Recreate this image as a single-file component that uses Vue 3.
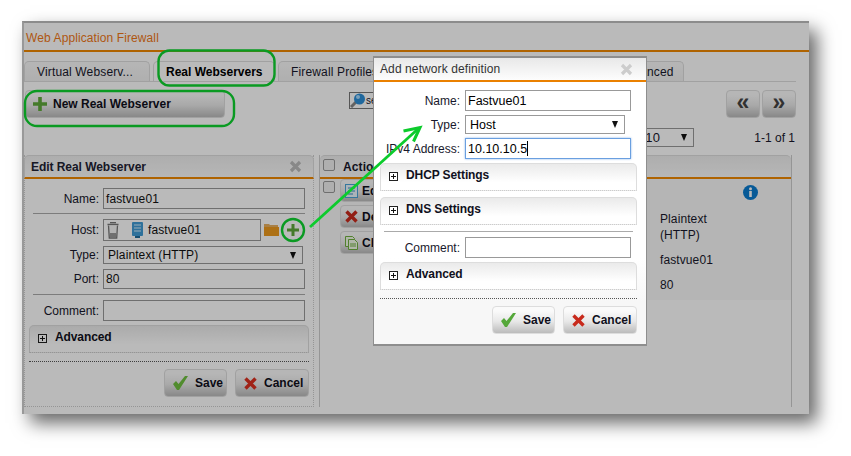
<script setup>
const tabs = [
  { id: 1, label: 'Virtual Webserv...', width: 126 },
  { id: 2, label: 'Real Webservers', width: 122, active: true },
  { id: 3, label: 'Firewall Profiles', width: 118 },
  { id: 4, label: '', width: 116 },
  { id: 5, label: '', width: 85 },
  { id: 6, label: 'Advanced', width: 78 }
]
</script>

<template>
  <div class="stage">
    <div class="window">
      <div class="title">Web Application Firewall</div>
      <div class="tabs">
        <div
          v-for="t in tabs"
          :key="t.id"
          class="tab"
          :class="{ active: t.active }"
          :style="{ width: t.width + 'px' }"
        >{{ t.label }}</div>
      </div>

      <div class="toolbar">
        <button class="btn new">
          <svg width="14" height="14" viewBox="0 0 14 14"><path d="M5.2 0h3.6v5.2H14v3.6H8.8V14H5.2V8.8H0V5.2h5.2z" fill="#5fa83a" /></svg>
          <span>New Real Webserver</span>
        </button>
        <div class="search">
          <svg width="16" height="15" viewBox="0 0 16 15"><path d="M6 9 1 14" stroke="#888" stroke-width="3" /><circle cx="9.500" cy="6" r="5.500" fill="#2c8fd8" /><circle cx="8" cy="4" r="2" fill="#a8dcff" /></svg>
          <span>search</span>
        </div>
        <div class="pager">
          <button class="btn page">«</button>
          <button class="btn page">»</button>
        </div>
      </div>

      <div class="paging">
        <div class="perpage"><span>10</span><i class="caret"></i></div>
        <div class="count">1-1 of 1</div>
      </div>

      <div class="main">
        <section class="edit">
          <header class="phead">
            <span>Edit Real Webserver</span>
            <svg class="close" width="13" height="13" viewBox="0 0 13 13"><path d="M2 2l9 9M11 2l-9 9" stroke="#bbb" stroke-width="3.2" /></svg>
          </header>
          <div class="form">
            <div class="row"><label>Name:</label><div class="input w202 h21">fastvue01</div></div>
            <div class="hr hr1"></div>
            <div class="row host">
              <label>Host:</label>
              <div class="input hostbox">
                <svg width="12" height="17" viewBox="0 0 12 17"><path d="M3 .7h6M.5 2.500h11" stroke="#777" stroke-width="1.300" fill="none" /><path d="M1.500 3.500 2.300 16h7.400l.8-12.500" fill="#f4f4f4" stroke="#777" stroke-width="1.300" /><rect x="3" y="11" width="6" height="4" fill="#999" /></svg>
                <svg class="srv" width="12" height="17" viewBox="0 0 12 17"><rect width="11" height="14" rx="1" fill="#3f9bd5" /><path d="M2 3h7M2 6h7M2 9h7" stroke="#d5eefc" /><path d="M3 14h5v2H3z" fill="#1d6a9c" /></svg>
                <span>fastvue01</span>
              </div>
              <svg class="folder" width="15" height="12" viewBox="0 0 15 12"><path d="M0 0h5l1 1h8v3H0z" fill="#e8b060" /><path d="M0 3h15v9H0z" fill="#ee9a1d" /></svg>
              <svg class="plus" width="12" height="12" viewBox="0 0 12 12"><path d="M4.500 0h3v4.500H12v3H7.500V12h-3V7.500H0v-3h4.500z" fill="#5fa83a" /></svg>
            </div>
            <div class="row type">
              <label>Type:</label>
              <div class="input select w200 h18"><span>Plaintext (HTTP)</span><i class="caret"></i></div>
            </div>
            <div class="row port"><label>Port:</label><div class="input w202 h20">80</div></div>
            <div class="hr hr2"></div>
            <div class="row comment"><label>Comment:</label><div class="input w202 h21"></div></div>
            <div class="expand adv">
              <span class="box"></span><b>Advanced</b>
            </div>
            <div class="dots"></div>
            <div class="actions">
              <button class="btn act save">
                <svg width="15" height="14" viewBox="0 0 15 14"><path d="M0 8l3-3 2.500 3L12 0h3L6 14H4z" fill="#6fc040" /></svg>Save
              </button>
              <button class="btn act cancel">
                <svg width="13" height="13" viewBox="0 0 13 13"><path d="M1.500 1.500l10 10M11.500 1.500l-10 10" stroke="#dc3020" stroke-width="3.400" /></svg>Cancel
              </button>
            </div>
          </div>
        </section>

        <section class="list">
          <header class="lhead"><i class="check headcheck"></i><b>Action</b></header>
          <div class="lbody">
            <div class="lact">
              <i class="check rowcheck"></i>
              <div class="btnstack">
                <button class="btn mini">
                  <svg width="13" height="14" viewBox="0 0 13 14"><rect x=".5" y=".5" width="12" height="13" fill="#eaf6fd" stroke="#4aa3d8" /><path d="M3 4h7M3 7h7M3 10h5" stroke="#3b8fc4" /></svg>Edit
                </button>
                <button class="btn mini">
                  <svg width="13" height="13" viewBox="0 0 13 13"><path d="M1.500 1.500l10 10M11.500 1.500l-10 10" stroke="#c82a1c" stroke-width="3.400" /></svg>Delete
                </button>
                <button class="btn mini">
                  <svg width="13" height="14" viewBox="0 0 13 14"><path d="M.5.500h7l2 2v8h-9z" fill="#f2fbe8" stroke="#70b040" /><path d="M3.500 3.500h6l3 3v7h-9z" fill="#f2fbe8" stroke="#70b040" /><path d="M5 8h6M5 10h6" stroke="#70b040" /></svg>Clone
                </button>
              </div>
            </div>
            <div class="ldetails">
              <svg class="info" width="15" height="15" viewBox="0 0 15 15"><circle cx="7.500" cy="7.500" r="7.500" fill="#0a7cd0" /><rect x="6.200" y="6" width="2.600" height="6" fill="#fff" /><circle cx="7.500" cy="3.800" r="1.500" fill="#fff" /></svg>
              <div class="val plain">Plaintext<br />(HTTP)</div>
              <div class="val host2">fastvue01</div>
              <div class="val port2">80</div>
            </div>
          </div>
        </section>
      </div>

      <div class="dim"></div>
    </div>

    <div class="modal">
      <header class="mhead">
        <span>Add network definition</span>
        <svg class="mclose" width="13" height="13" viewBox="0 0 13 13"><path d="M2 2l9 9M11 2l-9 9" stroke="#ccc" stroke-width="3.200" /></svg>
      </header>
      <div class="mform">
        <div class="mrow"><label>Name:</label><div class="input w166 h21 text13">Fastvue01</div></div>
        <div class="mrow m4"><label>Type:</label><div class="input select w160 h19 text13"><span>Host</span><i class="caret"></i></div></div>
        <div class="mrow m4"><label>IPv4 Address:</label><div class="input w166 h21 focus text13">10.10.10.5<i class="cursor"></i></div></div>
        <div class="expand m4x"><span class="box"></span><b>DHCP Settings</b></div>
        <div class="expand m6x"><span class="box"></span><b>DNS Settings</b></div>
        <div class="mhr"></div>
        <div class="mrow m5"><label>Comment:</label><div class="input w166 h21"></div></div>
        <div class="expand m4x"><span class="box"></span><b>Advanced</b></div>
        <div class="dots mdots"></div>
        <div class="actions">
          <button class="btn act save">
            <svg width="15" height="14" viewBox="0 0 15 14"><path d="M0 8l3-3 2.500 3L12 0h3L6 14H4z" fill="#55a83a" /></svg>Save
          </button>
          <button class="btn act cancel">
            <svg width="13" height="13" viewBox="0 0 13 13"><path d="M1.500 1.500l10 10M11.500 1.500l-10 10" stroke="#c82a1c" stroke-width="3.400" /></svg>Cancel
          </button>
        </div>
      </div>
    </div>

    <svg class="marks" width="851" height="456" viewBox="0 0 851 456" fill="none">
      <rect x="158.500" y="50.500" width="116" height="35" rx="11" stroke="#0a9a22" stroke-width="2.400" />
      <rect x="25" y="91" width="209" height="35" rx="12" stroke="#0a9a22" stroke-width="2.400" />
      <circle cx="293" cy="230" r="11" stroke="#0a9a22" stroke-width="2.400" />
      <path d="M310 227 419 128" stroke="#0ccb2c" stroke-width="2.800" />
      <path d="M403.500 131 420 127.500 413.500 141.500" stroke="#0ccb2c" stroke-width="3" />
    </svg>
  </div>
</template>

<style>
html, body { margin: 0; background: #fff; }
</style>

<style scoped>
.stage {
  position: relative;
  width: 851px;
  height: 456px;
  overflow: hidden;
  padding: 21px 0 0 22px;
  box-sizing: border-box;
  font: 12px "Liberation Sans", Arial, sans-serif;
  letter-spacing: .1px;
  color: #18182c;
}
.window {
  position: relative;
  width: 787px;
  height: 393px;
  box-sizing: border-box;
  background: #fff;
  border-top: 2px solid #8c8c8c;
  border-left: 2px solid #999;
  box-shadow: 8px 9px 17px rgba(0, 0, 0, .6);
}
.dim { position: absolute; inset: 0; background: rgba(0, 0, 0, .27); }
.title {
  height: 27px;
  line-height: 30px;
  padding-left: 2px;
  color: #f07818;
  border-bottom: 2px solid #f08800;
}
.tabs {
  display: flex;
  gap: 3px;
  width: 772px;
  height: 20px;
  margin-top: 9px;
  border-bottom: 1px solid #ddd;
  box-sizing: content-box;
}
.tab {
  box-sizing: border-box;
  height: 20px;
  line-height: 21px;
  padding-left: 12px;
  font-size: 12px;
  letter-spacing: .15px;
  border: 1px solid #ddd;
  border-bottom: 0;
  border-radius: 5px 5px 0 0;
  background: linear-gradient(#fafafa, #f0f0f0);
  white-space: nowrap;
  overflow: hidden;
}
.tab.active { font-weight: 700; background: #fff; color: #000; letter-spacing: 0; }
.toolbar {
  display: flex;
  align-items: flex-start;
  margin: 8px 13px 0 1px;
  height: 28px;
}
.btn {
  display: flex;
  align-items: center;
  border: 1px solid #ddd;
  border-radius: 4px;
  background: linear-gradient(#fafafa 15%, #e8e8e8 55%, #bbb);
  font: 12px "Liberation Sans", Arial, sans-serif;
  color: #10101c;
  padding: 0;
  box-sizing: border-box;
}
.new { width: 200px; height: 28px; padding-left: 7px; gap: 6px; font-weight: 700; }
.search {
  display: flex;
  align-items: center;
  width: 60px;
  height: 17px;
  margin: 2px 0 0 124px;
  border: 1px solid #777;
  background: #fff;
  font-size: 10px;
  box-sizing: border-box;
}
.search svg { flex: none; }
.pager { display: flex; gap: 2px; margin-left: auto; }
.page { width: 34px; height: 28px; justify-content: center; font-size: 23px; font-weight: 700; padding-bottom: 4px; color: #444; }
.paging {
  display: flex;
  justify-content: flex-end;
  align-items: center;
  height: 19px;
  margin: 10px 14px 0 0;
}
.perpage {
  display: flex;
  align-items: center;
  width: 76px;
  height: 19px;
  box-sizing: border-box;
  padding-left: 26px;
  border: 1px solid #999;
  font-size: 13px;
}
.caret {
  display: block;
  width: 0;
  height: 0;
  border: 3.500px solid transparent;
  border-top: 7px solid #111;
  border-bottom: 0;
  margin-left: auto;
  margin-right: 6px;
}
.count { margin-left: 60px; font-size: 12px; letter-spacing: 0; }
.main { display: flex; margin-top: 8px; gap: 5px; height: 237px; }
.edit {
  width: 290px;
  height: 252px;
  box-sizing: border-box;
  border: 1px dotted #ccc;
  border-top: 0;
  flex: none;
}
.phead {
  display: flex;
  justify-content: space-between;
  align-items: center;
  height: 21px;
  padding: 0 7px 0 6px;
  font-size: 12px;
  font-weight: 700;
  letter-spacing: -.05px;
  color: #223;
  border: 1px solid #ddd;
  border-bottom: 2px solid #f08800;
  border-radius: 5px 5px 0 0;
  margin: 0 -1px;
  background: linear-gradient(#eee, #fbfbfb);
  box-sizing: content-box;
}
.close { margin-right: 4px; }
.form { padding: 9px 4px 0 4px; }
.row { display: flex; align-items: center; }
.row label { width: 70px; text-align: right; margin-right: 4px; flex: none; font-size: 12px; letter-spacing: 0; }
.input {
  display: flex;
  align-items: center;
  box-sizing: border-box;
  border: 1px solid #999;
  background: #fff;
  padding-left: 2px;
  font-size: 12px;
  color: #111;
}
.w202 { width: 202px; }
.w200 { width: 200px; }
.w166 { width: 166px; }
.w160 { width: 160px; }
.h21 { height: 21px; }
.h20 { height: 20px; }
.h19 { height: 19px; }
.h18 { height: 18px; }
.text13 { font-size: 12.500px; padding-left: 2px; color: #000; letter-spacing: 0; }
.select span { padding-left: 2px; }
.hr { height: 1px; background: #aaa; margin: 4px 0 5px 4px; width: 272px; }
.hr2 { margin: 5px 0 5px 4px; }
.hostbox { width: 158px; height: 22px; padding-left: 3px; gap: 0; }
.hostbox .srv { margin: 0 4px 0 13px; }
.folder { margin-left: 3px; }
.plus { margin-left: 8px; }
.type, .port { margin-top: 5px; }
.expand {
  height: 28px;
  box-sizing: border-box;
  border: 1px solid #ddd;
  border-bottom: 1px dotted #ccc;
  border-radius: 5px 5px 0 0;
  background: linear-gradient(#eaeaea, #fff 70%);
  display: flex;
  align-items: flex-start;
  padding: 4px 0 0 8px;
  gap: 8px;
  font-size: 12px;
  letter-spacing: -.1px;
  color: #101020;
}
.adv { margin: 4px 0 0 0; width: 280px; }
.box {
  width: 7px;
  height: 7px;
  border: 1px solid #222;
  margin-top: 4px;
  flex: none;
  background:
    linear-gradient(#111, #111) center / 5px 1px no-repeat,
    linear-gradient(#111, #111) center / 1px 5px no-repeat,
    #fff;
}
.dots { border-top: 1px dotted #555; margin-top: 8px; width: 280px; }
.actions { display: flex; justify-content: flex-end; gap: 8px; margin-top: 7px; width: 280px; }
.act { height: 28px; font-weight: 700; gap: 7px; padding-left: 8px; }
.save { width: 63px; }
.cancel { width: 74px; }
.list {
  width: 473px;
  height: 252px;
  box-sizing: border-box;
  border-left: 1px solid #ccc;
  border-right: 1px solid #ccc;
  overflow: hidden;
}
.lhead {
  display: flex;
  align-items: center;
  gap: 8px;
  height: 21px;
  padding-left: 3px;
  border-top: 1px solid #ddd;
  border-bottom: 2px solid #f08800;
  background: linear-gradient(#eee, #fbfbfb);
  border-radius: 5px 5px 0 0;
  box-sizing: content-box;
}
.check {
  display: block;
  width: 12px;
  height: 12px;
  border: 1px solid #999;
  border-radius: 2px;
  background: #f0f0f0;
  box-sizing: border-box;
}
.headcheck { margin-bottom: 3px; }
.rowcheck { margin-top: 2px; }
.lbody { display: flex; height: 121px; background: #f8f8f8; }
.lact { display: flex; padding: 0 0 0 3px; gap: 5px; }
.btnstack { display: flex; flex-direction: column; gap: 3px; }
.mini { width: 70px; height: 23px; gap: 4px; padding-left: 4px; font-weight: 700; }
.ldetails { position: relative; padding: 0 0 0 250px; flex: 1; }
.info { position: absolute; left: 333px; top: 6px; }
.val { font-size: 12px; line-height: 16px; }
.plain { margin-top: 32px; }
.host2 { margin-top: 9px; }
.port2 { margin-top: 9px; }
.modal {
  position: absolute;
  left: 373px;
  top: 56px;
  width: 274px;
  height: 290px;
  box-sizing: border-box;
  border: 1px solid #8e8e8e;
  border-top-width: 2px;
  border-bottom-width: 2px;
  background: linear-gradient(#fff 70%, #f7f7f7 85%);
}
.mhead {
  display: flex;
  justify-content: space-between;
  align-items: center;
  height: 22px;
  padding: 0 13px 0 6px;
  border-bottom: 2px solid #ea8000;
  background: linear-gradient(#e8e8e8, #fdfdfd);
  color: #333;
  box-sizing: content-box;
}
.mform { padding: 8px 0 0 6px; }
.mrow { display: flex; align-items: center; }
.mrow label { width: 80px; text-align: right; margin-right: 5px; flex: none; letter-spacing: 0; }
.m4 { margin-top: 4px; }
.m5 { margin-top: 5px; }
.focus { border-color: #6a9fe0; box-shadow: 0 0 2px #8ab4ea; }
.cursor { display: block; width: 1px; height: 15px; background: #000; }
.m4x { margin-top: 4px; width: 257px; }
.m6x { margin-top: 6px; width: 257px; }
.mhr { height: 1px; background: #aaa; width: 249px; margin: 6px 0 0 4px; }
.mdots { width: 257px; }
.mform .actions { width: 257px; }
.marks { position: absolute; left: 0; top: 0; pointer-events: none; }
</style>
